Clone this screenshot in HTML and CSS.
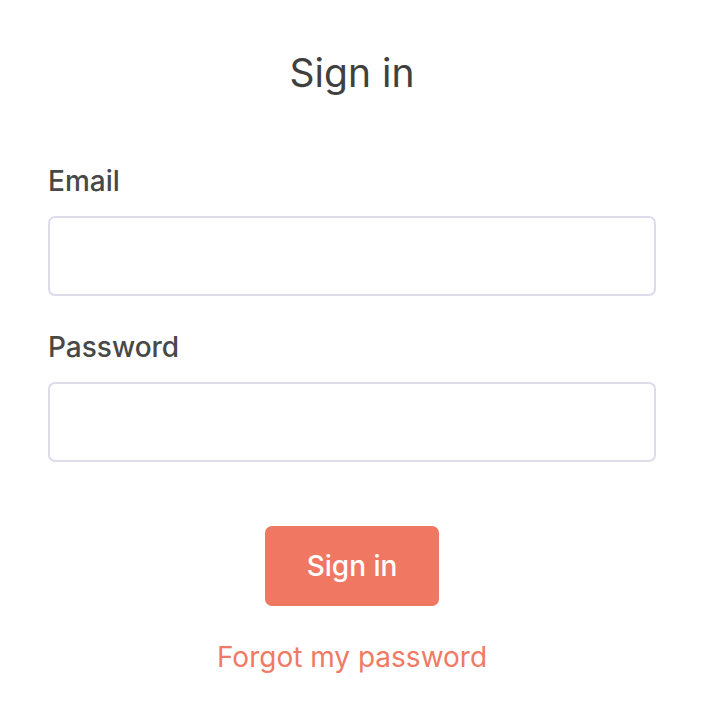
FILE: index.html
```html
<!DOCTYPE html>
<html>
<head>
<meta charset="utf-8">
<link rel="stylesheet" href="styles.css">
</head>
<body>
<main class="page">
  <h1 class="title">Sign in</h1>
  <form class="form">
    <label class="label" for="email">Email</label>
    <input class="input" id="email" type="email">
    <label class="label" for="password">Password</label>
    <input class="input" id="password" type="password">
    <div class="actions">
      <button class="btn" type="button">Sign in</button>
      <a class="link" href="#">Forgot my password</a>
    </div>
  </form>
</main>
</body>
</html>
```

FILE: styles.css
```css
html, body {
  margin: 0;
  padding: 0;
  background: #ffffff;
}
body {
  font-family: Inter, "Noto Sans", sans-serif;
  color: #3d3d3d;
}
.page {
  padding: 47px 48px 0;
}
.title {
  margin: 0;
  text-align: center;
  font-size: 39px;
  font-weight: 400;
  line-height: 52px;
  color: #404040;
}
.form {
  display: flex;
  flex-direction: column;
  margin-top: 64px;
}
.label {
  font-size: 28px;
  line-height: 36px;
  font-weight: 500;
  color: #484848;
  margin-bottom: 17px;
}
.input {
  box-sizing: border-box;
  height: 80px;
  width: 100%;
  border: 2px solid #dcdcea;
  border-radius: 7px;
  margin: 0 0 33px;
  padding: 0 16px;
  font: inherit;
}
.actions {
  display: flex;
  flex-direction: column;
  align-items: center;
  margin-top: 31px;
}
.btn {
  height: 80px;
  width: 174px;
  border: 0;
  border-radius: 7px;
  background: #f07862;
  color: #fff;
  font-family: inherit;
  font-size: 28px;
  font-weight: 500;
}
.link {
  margin-top: 33px;
  font-size: 28px;
  line-height: 36px;
  color: #f07a64;
  text-decoration: none;
}
```
